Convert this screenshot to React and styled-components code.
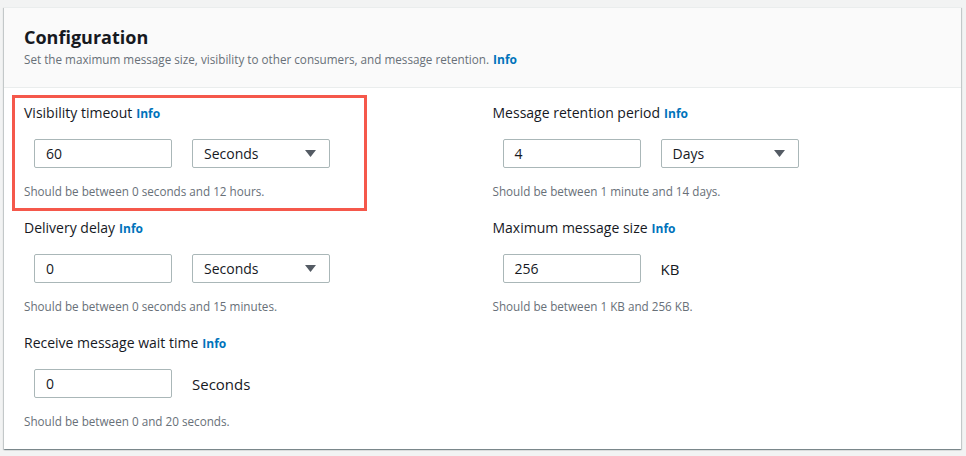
import React from "react";
import styled, { createGlobalStyle } from "styled-components";

const Global = createGlobalStyle`
  html, body { margin: 0; padding: 0; background: #f2f3f3; }
  body { font-family: "Open Sans", "Liberation Sans", Arial, sans-serif; color: #16191f; }
  * { box-sizing: border-box; }
`;

const Page = styled.div`
  padding: 7px 5px 8px 4px;
`;

const Card = styled.section`
  background: #fff;
  border-top: 1px solid #eaeded;
  box-shadow: 0 1px 1px 0 rgba(0, 28, 36, 0.3), 1px 1px 1px 0 rgba(0, 28, 36, 0.15),
    -1px 1px 1px 0 rgba(0, 28, 36, 0.15);
`;

const Header = styled.header`
  background: #fafafa;
  border-bottom: 1px solid #eaeded;
  padding: 18px 20px 19px;
`;

const Title = styled.h2`
  margin: 0;
  font-size: 18px;
  line-height: 22px;
  font-weight: 700;
  color: #16191f;
`;

const Description = styled.p`
  margin: 3px 0 0;
  font-size: 11.7px;
  line-height: 16px;
  color: #687078;
`;

const InfoLink = styled.a`
  color: #0073bb;
  font-weight: 700;
  font-size: 12px;
  text-decoration: none;
  margin-left: 4px;
`;

const Body = styled.div`
  display: grid;
  grid-template-columns: 1fr 1fr;
  column-gap: 20px;
  row-gap: 19px;
  padding: 15px 20px 20px;
`;

const Field = styled.div`
  position: relative;
  display: flex;
  flex-direction: column;
`;

const Highlight = styled.div`
  position: absolute;
  top: -8px;
  left: -12px;
  right: 106px;
  bottom: -12px;
  border: 3px solid #f5584b;
  pointer-events: none;
`;

const Label = styled.label`
  font-size: 14px;
  line-height: 20px;
  color: #16191f;
`;

const Controls = styled.div`
  display: flex;
  align-items: center;
  gap: 20px;
  height: 29px;
  margin: 15px 0 15px 10px;
`;

const Input = styled.div`
  width: 138px;
  height: 29px;
  border: 1px solid #aab7b8;
  border-radius: 2px;
  padding: 0 11px;
  display: flex;
  align-items: center;
  font-size: 14px;
  color: #16191f;
`;

const Select = styled(Input)`
  justify-content: space-between;
  padding-right: 13px;
`;

const Unit = styled.span`
  font-size: 15px;
  line-height: 20px;
  color: #16191f;
`;

const Hint = styled.div`
  font-size: 11.7px;
  line-height: 16px;
  height: 16px;
  color: #687078;
`;

const Caret = () => (
  <svg width="11" height="7" viewBox="0 0 11 7">
    <polygon points="0,0 11,0 5.5,7" fill="#545b64" />
  </svg>
);

const fields = [
  { label: "Visibility timeout", value: "60", unit: "Seconds", select: true, hint: "Should be between 0 seconds and 12 hours.", highlight: true },
  { label: "Message retention period", value: "4", unit: "Days", select: true, hint: "Should be between 1 minute and 14 days." },
  { label: "Delivery delay", value: "0", unit: "Seconds", select: true, hint: "Should be between 0 seconds and 15 minutes." },
  { label: "Maximum message size", value: "256", unit: "KB", hint: "Should be between 1 KB and 256 KB." },
  { label: "Receive message wait time", value: "0", unit: "Seconds", hint: "Should be between 0 and 20 seconds." },
];

export default function App() {
  return (
    <Page>
      <Global />
      <Card>
        <Header>
          <Title>Configuration</Title>
          <Description>
            Set the maximum message size, visibility to other consumers, and message retention.
            <InfoLink href="#">Info</InfoLink>
          </Description>
        </Header>
        <Body>
          {fields.map((f) => (
            <Field key={f.label}>
              {f.highlight && <Highlight />}
              <Label>
                {f.label}
                <InfoLink href="#">Info</InfoLink>
              </Label>
              <Controls>
                <Input>{f.value}</Input>
                {f.select ? (
                  <Select>
                    <span>{f.unit}</span>
                    <Caret />
                  </Select>
                ) : (
                  <Unit>{f.unit}</Unit>
                )}
              </Controls>
              <Hint>{f.hint}</Hint>
            </Field>
          ))}
        </Body>
      </Card>
    </Page>
  );
}
